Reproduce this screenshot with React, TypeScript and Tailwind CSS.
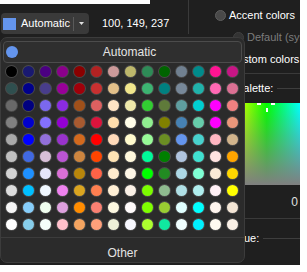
import React from "react";

// named-colour palette, 10 rows x 14 columns
const palette: string[][] = [
  ["#000000", "#191970", "#4b0082", "#8b008b", "#8b0000", "#b22222", "#cc9a9a", "#bdb76b", "#2e8b57", "#006400", "#708090", "#008b8b", "#ff1493", "#c71585"],
  ["#2f4f4f", "#00008b", "#483d8b", "#990099", "#a0000a", "#c83030", "#e3c08a", "#f0e68c", "#3cb371", "#008080", "#778899", "#20b2aa", "#ff69b4", "#db7093"],
  ["#696969", "#000080", "#7b68ee", "#8a2be2", "#a0501a", "#dd6060", "#ffe4c4", "#eee8aa", "#32cd32", "#5f7a3a", "#5f9ea0", "#00ced1", "#ff00ff", "#f08080"],
  ["#808080", "#0000cd", "#8470ff", "#9400d3", "#a85a30", "#dc143c", "#ffdead", "#fffde8", "#90ee90", "#808000", "#4682b4", "#66cdaa", "#ff00ff", "#e9967a"],
  ["#a9a9a9", "#0000ff", "#9370db", "#9932cc", "#d2691e", "#ff0000", "#ffdab9", "#fffacd", "#98fb98", "#6b8e23", "#6495ed", "#48d1cc", "#ffb6c1", "#d2b48c"],
  ["#c0c0c0", "#4169e1", "#d8bfd8", "#ba55d3", "#cd853f", "#ff4500", "#ffe4b5", "#fff8dc", "#00fa9a", "#008000", "#b0c4de", "#40e0d0", "#ffe4e1", "#ffa500"],
  ["#d3d3d3", "#1e90ff", "#e6e6fa", "#da70d6", "#b8860b", "#ff6347", "#ffebcd", "#fdf5e6", "#00ff00", "#228b22", "#add8e6", "#7fffd4", "#faebd7", "#ffd700"],
  ["#dcdcdc", "#00bfff", "#f0f8ff", "#ee82ee", "#daa520", "#ff7f50", "#ffefd5", "#faf0e6", "#7cfc00", "#8fbc8f", "#b0e0e6", "#afeeee", "#fff0f5", "#ffff00"],
  ["#f5f5f5", "#87cefa", "#f0fff0", "#dda0dd", "#ff8c00", "#fa8072", "#fdf8e1", "#fffafa", "#7fff00", "#9acd32", "#e0ffff", "#00ffff", "#fff5ee", "#f3e5d5"],
  ["#ffffff", "#87ceeb", "#f5fffa", "#ffc0cb", "#f4a460", "#ffa07a", "#eef0d8", "#f8f8ff", "#adff2f", "#10e8a0", "#f0ffff", "#00f0ff", "#fffaf0", "#faf0e6"],
];

function Swatch({ color }: { color: string }) {
  return (
    <div className="flex h-[17px] w-[17px] items-center justify-center">
      <div
        className="h-[11px] w-[11px] rounded-full ring-1 ring-white/15"
        style={{ backgroundColor: color }}
      />
    </div>
  );
}

function Radio({ label, dim }: { label: string; dim?: boolean }) {
  return (
    <div className="flex h-[22px] items-center gap-[3px] whitespace-nowrap">
      <div
        className={
          dim
            ? "h-[11px] w-[11px] shrink-0 rounded-full border border-[#404040] bg-[#333333]"
            : "h-[11px] w-[11px] shrink-0 rounded-full border border-[#5e5e5e] bg-[#494949]"
        }
      />
      <span className={dim ? "text-[#7c7c7c]" : "text-white"}>{label}</span>
    </div>
  );
}

export default function App() {
  return (
    <div className="relative h-[272px] w-[307px] overflow-hidden bg-white font-['Liberation_Sans',Arial,sans-serif] text-[11px] text-white">
      <div className="flex h-[265px] w-[300px] overflow-hidden bg-[#1f1f1f]">
        {/* left pane: colour combo + rgb value */}
        <div className="w-[188px] shrink-0">
          <div className="h-[4px] w-[150px] bg-white" />
          <div className="mt-[9px] flex items-center">
            <div className="ml-[1px] flex h-[21px] w-[88px] items-center rounded-[4px] bg-[#3a3a3a] pl-[2px]">
              <div className="h-[12px] w-[13px] bg-[#6495ed]" />
              <span className="ml-[5px] flex-1">Automatic</span>
              <div className="h-[14px] w-px bg-[#5a5a5a]" />
              <div className="flex w-[15px] justify-center">
                <svg width="5" height="3" viewBox="0 0 5 3">
                  <polygon points="0,0 5,0 2.5,3" fill="#e0e0e0" />
                </svg>
              </div>
            </div>
            <span className="ml-[13px] text-[11px]">100, 149, 237</span>
          </div>
        </div>

        <div className="h-[34px] w-px shrink-0 bg-[#3a3a3a]" />

        {/* right pane: colour source + palette */}
        <div className="flex min-w-0 flex-1 flex-col pt-[4px]">
          <div className="pl-[26px]">
            <Radio label="Accent colors" />
          </div>
          <div className="pl-[44px]">
            <Radio label="Default (system)" dim />
          </div>
          <div className="pl-[26px]">
            <Radio label="Custom colors" />
          </div>
          <div className="ml-[26px] mt-[3px] h-px bg-[#3a3a3a]" />

          <div className="pl-[47px]">
            <div className="mt-[4px] flex h-[20px] items-center gap-[4px]">
              <span className="whitespace-nowrap">Palette:</span>
              <div className="h-px flex-1 bg-[#3e3e3e]" />
            </div>
            <div className="relative mt-[5px] h-[82px] bg-[linear-gradient(to_bottom,rgba(128,128,128,0),#7f7f7f),linear-gradient(to_right,#e8ff00,#a6ff00_14%,#00ff00_48%,#00ffff)]">
              <div className="absolute left-[21px] top-0 h-[2px] w-[4px] bg-white" />
              <div className="absolute left-[35px] top-0 h-[2px] w-[4px] bg-white" />
              <div className="absolute left-[30px] top-[5px] h-[4px] w-[2px] bg-white" />
            </div>
            <div className="flex h-[33px] items-center justify-end pr-[2px] text-[12px] text-[#e0e0e0]">
              0
            </div>
            <div className="h-px bg-[#3a3a3a]" />
            <div className="mt-[9px] flex h-[20px] items-center gap-[4px]">
              <span>Hue:</span>
              <div className="h-px flex-1 bg-[#3e3e3e]" />
            </div>
          </div>
        </div>
      </div>

      {/* dropdown palette popup */}
      <div className="absolute left-0 top-[37px] flex h-[226px] w-[245px] flex-col rounded-[7px] border border-[#3c3c3c] bg-[#2b2b2b] text-[12px] text-[#e4e4e4]">
        <div className="px-[2px] pt-[3px]">
          <div className="flex h-[22px] items-center rounded-[4px] border border-[#4c4c4c] bg-[#2f2f2f] pl-[2px]">
            <div className="h-[12px] w-[12px] rounded-full bg-[#6495ed]" />
            <span className="flex-1 text-center">Automatic</span>
          </div>
          <div className="grid grid-cols-[repeat(14,17px)]">
            {palette.flat().map((c, i) => (
              <Swatch key={i} color={c} />
            ))}
          </div>
        </div>
        <div className="mt-[4px] h-px bg-[#3c3c3c]" />
        <div className="flex flex-1 items-center justify-center pt-[5px]">Other</div>
      </div>
    </div>
  );
}
